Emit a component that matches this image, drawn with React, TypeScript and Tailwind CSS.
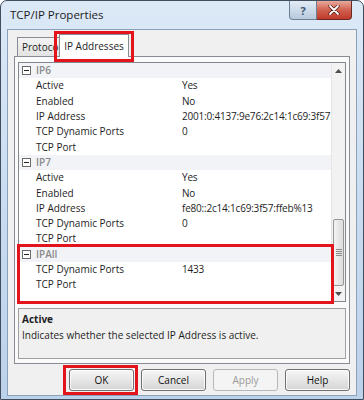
import React from 'react';

const groups: { cat: string; rows: { label: string; value: string }[] }[] = [
  {
    cat: 'IP6',
    rows: [
      { label: 'Active', value: 'Yes' },
      { label: 'Enabled', value: 'No' },
      { label: 'IP Address', value: '2001:0:4137:9e76:2c14:1c69:3f57' },
      { label: 'TCP Dynamic Ports', value: '0' },
      { label: 'TCP Port', value: '' },
    ],
  },
  {
    cat: 'IP7',
    rows: [
      { label: 'Active', value: 'Yes' },
      { label: 'Enabled', value: 'No' },
      { label: 'IP Address', value: 'fe80::2c14:1c69:3f57:ffeb%13' },
      { label: 'TCP Dynamic Ports', value: '0' },
      { label: 'TCP Port', value: '' },
    ],
  },
];

function MinusBox() {
  return (
    <div className="w-[9px] h-[9px] border border-[#6b6b6b] bg-white flex items-center justify-center">
      <div className="w-[5px] h-[1px] bg-[#222]" />
    </div>
  );
}

function CatRow({ name }: { name: string }) {
  return (
    <div className="h-[15.3px] flex items-center bg-[#f1f3f6]">
      <div className="w-[17px] pl-[3px] flex items-center">
        <MinusBox />
      </div>
      <span className="text-[#8a8a8a] font-semibold leading-[15px]">{name}</span>
    </div>
  );
}

function PropRow({ label, value }: { label: string; value: string }) {
  return (
    <div className="h-[15.3px] flex items-center bg-white">
      <div className="w-[163px] pl-[17px] whitespace-nowrap leading-[15px] text-[#1e1e1e]">{label}</div>
      <div className="flex-1 min-w-0 whitespace-nowrap leading-[15px] tracking-[-0.2px] text-[#1e1e1e]">{value}</div>
    </div>
  );
}

function Button({ label, disabled }: { label: string; disabled?: boolean }) {
  return (
    <div
      className={
        disabled
          ? 'w-[65px] h-[22px] rounded-[3px] border border-[#b5b8bb] bg-[#f4f4f4] flex items-center justify-center text-[#9a9a9a]'
          : 'w-[65px] h-[22px] rounded-[3px] border border-[#707070] bg-gradient-to-b from-[#f6f6f6] via-[#e6e6e6] to-[#d4d4d4] flex items-center justify-center text-[#111] shadow-[inset_0_0_0_1px_#fcfcfc]'
      }
    >
      {label}
    </div>
  );
}

export default function App() {
  return (
    <div className="w-[364px] h-[400px] bg-white font-['Open_Sans','Noto_Sans',sans-serif] text-[10px] leading-none">
      <div className="w-[364px] h-[400px] rounded-t-[7px] border border-[#3f4d5f] bg-gradient-to-b from-[#dce9f7] via-[#c9dcf1] to-[#bcd2ea] flex flex-col">
        {/* title bar */}
        <div className="h-[28px] relative flex items-center pl-[9px]">
          <span className="text-[11.5px] text-[#1b1b1b]">TCP/IP Properties</span>
          <div className="absolute right-[11px] top-0 flex">
            <div className="w-[28px] h-[19px] rounded-bl-[4px] border border-[#6d7f95] border-t-0 bg-gradient-to-b from-[#e3ecf6] to-[#b8c9dc] flex items-center justify-center text-[#3e5570] text-[11px] font-bold">
              ?
            </div>
            <div className="w-[35px] h-[19px] rounded-br-[4px] border border-[#6e2a22] border-t-0 border-l-0 bg-gradient-to-b from-[#e8a99c] via-[#d0604f] to-[#c0392b] flex items-center justify-center">
              <svg width="12" height="10" viewBox="0 0 12 10">
                <path d="M2 1 L10 9 M10 1 L2 9" stroke="#4a1510" strokeWidth="3.2" strokeLinecap="round" />
                <path d="M2 1 L10 9 M10 1 L2 9" stroke="#ffffff" strokeWidth="1.8" strokeLinecap="round" />
              </svg>
            </div>
          </div>
        </div>

        {/* client area */}
        <div className="flex-1 mx-[6px] mb-[3px] border border-[#8ba1ba] bg-[#f0f0f0] flex flex-col px-[6px]">
          {/* tabs */}
          <div className="h-[26px] flex items-end pl-[3px]">
            <div className="h-[19px] w-[46px] border border-b-0 border-[#898c95] bg-gradient-to-b from-[#f3f3f3] to-[#e3e3e3] overflow-hidden pl-[4px] flex items-center text-[#1e1e1e] whitespace-nowrap">
              Protocol
            </div>
            <div className="relative -ml-[4px] mb-[-1px] z-10">
              <div className="h-[23px] w-[70px] border border-b-0 border-[#898c95] bg-white flex items-center justify-center text-[#1e1e1e] whitespace-nowrap">
                IP Addresses
              </div>
              <div className="absolute -left-[5px] -top-[3px] -right-[5px] -bottom-[5px] border-[3px] border-[#e3141c]" />
            </div>
          </div>

          {/* tab panel */}
          <div className="h-[308px] border border-[#898c95] bg-[#fafafa] flex flex-col px-[3px] pt-[5px] pb-[4px] gap-[6px]">
            {/* property grid */}
            <div className="h-[240px] border border-[#828790] bg-white flex">
              <div className="flex-1 min-w-0 flex flex-col">
                {groups.map((g) => (
                  <div key={g.cat}>
                    <CatRow name={g.cat} />
                    {g.rows.map((r, i) => (
                      <PropRow key={i} label={r.label} value={r.value} />
                    ))}
                  </div>
                ))}
                <div className="relative flex-1 flex flex-col">
                  <CatRow name="IPAll" />
                  <PropRow label="TCP Dynamic Ports" value="1433" />
                  <PropRow label="TCP Port" value="" />
                  <div className="absolute -left-[2px] -top-[3px] -right-[3px] -bottom-[3px] border-[3px] border-[#e3141c] z-10" />
                </div>
              </div>
              {/* scrollbar */}
              <div className="w-[14px] bg-[#f2f2f2] border-l border-[#e6e6e6] flex flex-col">
                <div className="h-[15px] flex items-center justify-center">
                  <svg width="7" height="4" viewBox="0 0 7 4">
                    <path d="M0 4 L3.5 0 L7 4 Z" fill="#4d4d4d" />
                  </svg>
                </div>
                <div className="flex-1 flex flex-col justify-end px-[1px]">
                  <div className="h-[67px] rounded-[2px] border border-[#979797] bg-gradient-to-r from-[#f3f3f3] to-[#dcdcdc] flex flex-col items-center justify-center gap-[1px]">
                    <div className="w-[6px] h-[1px] bg-[#8a8a8a]" />
                    <div className="w-[6px] h-[1px] bg-[#8a8a8a]" />
                    <div className="w-[6px] h-[1px] bg-[#8a8a8a]" />
                    <div className="w-[6px] h-[1px] bg-[#8a8a8a]" />
                  </div>
                </div>
                <div className="h-[15px] flex items-center justify-center">
                  <svg width="7" height="4" viewBox="0 0 7 4">
                    <path d="M0 0 L3.5 4 L7 0 Z" fill="#4d4d4d" />
                  </svg>
                </div>
              </div>
            </div>

            {/* description */}
            <div className="flex-1 border border-[#a0a0a0] bg-[#f0f0f0] px-[3px] pt-[4px] flex flex-col gap-[3px] text-[#1e1e1e]">
              <span className="font-bold leading-[13px]">Active</span>
              <span className="leading-[13px]">Indicates whether the selected IP Address is active.</span>
            </div>
          </div>

          {/* buttons */}
          <div className="flex-1 flex items-center justify-end gap-[7px]">
            <div className="relative">
              <Button label="OK" />
              <div className="absolute -left-[6px] -top-[4px] -right-[4px] -bottom-[4px] border-[3px] border-[#e3141c]" />
            </div>
            <Button label="Cancel" />
            <Button label="Apply" disabled />
            <Button label="Help" />
          </div>
        </div>
      </div>
    </div>
  );
}
